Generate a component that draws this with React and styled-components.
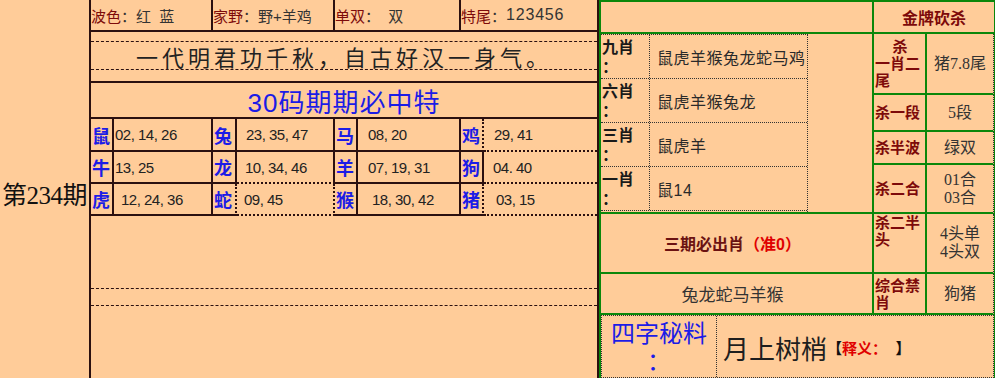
import React from "react";
import styled, { createGlobalStyle } from "styled-components";

const SANS = `"Liberation Sans", "Noto Sans CJK SC", sans-serif`;
const SERIF = `"Liberation Serif", "Noto Sans CJK SC", serif`;
const BG = "#FFCC99";
const DARK = "#2b1010";
const GREEN = "#0b870b";
const MAROON = "#7d0a0a";
const BLUE = "#1c1ce6";

const Global = createGlobalStyle`
  html, body { margin: 0; padding: 0; background: ${BG}; }
  * { box-sizing: border-box; }
`;

const Page = styled.div`
  display: flex;
  width: 995px;
  height: 378px;
  overflow: hidden;
  background: ${BG};
`;

const PeriodCell = styled.div`
  width: 89px;
  flex: none;
  display: flex;
  align-items: center;
  justify-content: center;
  padding-top: 8px;
  font-family: ${SERIF};
  font-size: 25px;
  color: #111;
  white-space: nowrap;
  letter-spacing: -0.5px;
`;

const MainTable = styled.div`
  width: 510px;
  flex: none;
  display: flex;
  flex-direction: column;
  border-left: 2px solid ${DARK};
  border-right: 2px solid ${DARK};
`;

const InfoRow = styled.div`
  display: grid;
  grid-template-columns: 122px 122px 126px 136px;
  height: 32px;
  border-bottom: 2px solid ${DARK};
`;

const InfoCell = styled.div`
  display: flex;
  align-items: center;
  font-family: ${SANS};
  font-size: 15px;
  color: #333;
  white-space: pre;
  border-right: ${(p) => (p.$last ? "none" : `2px solid ${DARK}`)};
`;

const Key = styled.span`
  color: ${MAROON};
`;

const Num = styled.span`
  font-size: 16px;
  letter-spacing: 0.8px;
`;

const PoemRow = styled.div`
  height: 51px;
  padding-top: 9px;
  border-bottom: 2px solid ${DARK};
`;

const PoemBand = styled.div`
  height: 29px;
  border-top: 1px dashed ${DARK};
  border-bottom: 1px dashed ${DARK};
  display: flex;
  align-items: center;
  justify-content: center;
  font-family: ${SERIF};
  font-size: 22px;
  letter-spacing: 4px;
  color: #222;
`;

const TitleRow = styled.div`
  height: 36px;
  border-bottom: 2px solid ${DARK};
  display: flex;
  align-items: center;
  justify-content: center;
  font-family: ${SANS};
  font-size: 26px;
  letter-spacing: 1px;
  color: ${BLUE};
`;

const ZGrid = styled.div`
  display: grid;
  grid-template-columns: 23px 99px 24px 98px 23px 103px 23px 113px;
  grid-template-rows: 33px 32px 32px;
`;

const ZLabel = styled.div`
  border-right: 2px ${(p) => p.$rs} ${DARK};
  border-bottom: 2px ${(p) => p.$bs} ${DARK};
  display: flex;
  align-items: center;
  padding-left: 1px;
  font-family: ${SERIF};
  font-weight: bold;
  font-size: 18px;
  color: ${BLUE};
`;

const ZValue = styled.div`
  border-right: ${(p) => (p.$last ? "none" : `2px ${p.$rs} ${DARK}`)};
  border-bottom: 2px ${(p) => p.$bs} ${DARK};
  display: flex;
  align-items: center;
  padding-left: ${(p) => p.$pad}px;
  font-family: ${SANS};
  font-size: 15px;
  letter-spacing: -0.5px;
  color: #222;
  white-space: pre;
`;

const EmptyArea = styled.div`
  flex: 1;
  padding-top: 72px;
`;

const DashedBand = styled.div`
  height: 18px;
  border-top: 1px dashed ${DARK};
  border-bottom: 1px dashed ${DARK};
`;

const RightPanel = styled.div`
  width: 396px;
  flex: none;
  display: flex;
  flex-direction: column;
  border-left: 2px solid ${GREEN};
  border-top: 2px solid ${GREEN};
  border-right: 1px solid ${GREEN};
`;

const TopArea = styled.div`
  display: flex;
  height: 313px;
`;

const LeftSection = styled.div`
  width: 273px;
  flex: none;
  display: flex;
  flex-direction: column;
  border-right: 2px solid ${GREEN};
`;

const BlankHeader = styled.div`
  height: 32px;
  border-bottom: 2px solid ${GREEN};
`;

const ZodiacList = styled.div`
  height: 178px;
  width: 207px;
  display: flex;
  flex-direction: column;
  border-top: 1px dotted #333;
  border-right: 1px dotted #333;
  padding-bottom: 2px;
`;

const ZRow = styled.div`
  flex: 1;
  display: flex;
  border-bottom: 1px dotted #333;
`;

const ZRowLabel = styled.div`
  width: 49px;
  flex: none;
  border-right: 1px dotted #333;
  padding: 3px 6px 0 1px;
  font-family: ${SANS};
  font-weight: bold;
  font-size: 16px;
  line-height: 20px;
  color: #1a1a1a;
`;

const ZRowValue = styled.div`
  flex: 1;
  display: flex;
  align-items: center;
  padding-left: 7px;
  font-family: ${SANS};
  font-size: 16px;
  letter-spacing: 0.5px;
  color: #2a2a2a;
`;

const BoldRow = styled.div`
  height: 62px;
  border-top: 2px solid ${GREEN};
  border-bottom: 2px solid ${GREEN};
  display: flex;
  align-items: center;
  justify-content: center;
  padding-right: 8px;
  font-family: ${SANS};
  font-weight: bold;
  font-size: 16px;
  color: #6b1212;
`;

const Red = styled.span`
  color: #e00000;
`;

const PlainRow = styled.div`
  height: 41px;
  border-bottom: 2px solid ${GREEN};
  display: flex;
  align-items: center;
  justify-content: center;
  padding-right: 8px;
  font-family: ${SANS};
  font-size: 17px;
  color: #333;
`;

const KillColumn = styled.div`
  flex: 1;
  display: flex;
  flex-direction: column;
`;

const KillHeader = styled.div`
  height: 32px;
  border-bottom: 2px solid ${GREEN};
  display: flex;
  align-items: center;
  justify-content: center;
  font-family: ${SANS};
  font-weight: bold;
  font-size: 16px;
  color: ${MAROON};
`;

const KillRow = styled.div`
  height: ${(p) => p.$h}px;
  display: grid;
  grid-template-columns: 53px 1fr;
  border-bottom: 2px solid ${GREEN};
  border-right: 1px dotted #333;
`;

const KillLabel = styled.div`
  border-right: 2px solid ${GREEN};
  display: flex;
  flex-direction: column;
  justify-content: ${(p) => (p.$top ? "flex-start" : "center")};
  padding-left: 1px;
  font-family: ${SANS};
  font-weight: bold;
  font-size: 15px;
  line-height: 17px;
  color: ${MAROON};
`;

const LabelLine = styled.span`
  display: block;
  text-align: ${(p) => p.$align || "left"};
`;

const KillValue = styled.div`
  display: flex;
  flex-direction: column;
  align-items: center;
  justify-content: center;
  font-family: ${SERIF};
  font-size: 16px;
  line-height: 18px;
  color: #333;
`;

const SecretRow = styled.div`
  height: 63px;
  display: flex;
  border: 1px dotted #333;
`;

const SecretLabel = styled.div`
  width: 115px;
  flex: none;
  border-right: 1px dotted #333;
  padding-top: 4px;
  text-align: center;
  font-family: ${SANS};
  font-size: 24px;
  line-height: 28px;
  color: ${BLUE};
`;

const SecretValue = styled.div`
  flex: 1;
  display: flex;
  align-items: center;
  padding-left: 6px;
  padding-top: 2px;
  font-family: ${SANS};
  font-size: 26px;
  color: #1e1e1e;
`;

const Note = styled.span`
  font-size: 15px;
  font-weight: bold;
  color: #111;
  white-space: pre;
`;

const zodiacRows = [
  [
    ["鼠", "02, 14, 26", 1],
    ["兔", "23, 35, 47", 9],
    ["马", "08, 20", 10],
    ["鸡", "29, 41", 10, true],
  ],
  [
    ["牛", "13, 25", 1],
    ["龙", "10, 34, 46", 8],
    ["羊", "07, 19, 31", 10],
    ["狗", "04. 40", 9],
  ],
  [
    ["虎", "12, 24, 36", 7],
    ["蛇", "09, 45", 7, true],
    ["猴", "18, 30, 42", 14],
    ["猪", "03, 15", 12, true],
  ],
];

const picks = [
  ["九肖", "鼠虎羊猴兔龙蛇马鸡"],
  ["六肖", "鼠虎羊猴兔龙"],
  ["三肖", "鼠虎羊"],
  ["一肖", "鼠14"],
];

const kills = [
  { h: 61, label: [["杀", "center"], ["一肖二"], ["尾"]], value: ["猪7.8尾"] },
  { h: 37, label: [["杀一段"]], value: ["5段"] },
  { h: 33, label: [["杀半波"]], value: ["绿双"] },
  { h: 49, label: [["杀二合"]], value: ["01合", "03合"] },
  { h: 60, label: [["杀二半"], ["头"]], value: ["4头单", "4头双"], top: true },
  { h: 41, label: [["综合禁"], ["肖"]], value: ["狗猪"] },
];

export default function App() {
  return (
    <>
      <Global />
      <Page>
        <PeriodCell>第234期</PeriodCell>
        <MainTable>
          <InfoRow>
            <InfoCell>
              <Key>波色</Key>：红  蓝
            </InfoCell>
            <InfoCell>
              <Key>家野</Key>：野+羊鸡
            </InfoCell>
            <InfoCell>
              <Key>单双</Key>：  双
            </InfoCell>
            <InfoCell $last>
              <Key>特尾</Key>：<Num>123456</Num>
            </InfoCell>
          </InfoRow>
          <PoemRow>
            <PoemBand>一代明君功千秋，自古好汉一身气。</PoemBand>
          </PoemRow>
          <TitleRow>30码期期必中特</TitleRow>
          <ZGrid>
            {zodiacRows.map((row, ri) =>
              row.map(([name, nums, pad, dotted], ci) => {
                const below = zodiacRows[ri + 1];
                const nextDotted = below && below[ci][3];
                const bs = dotted || nextDotted ? "dotted" : "solid";
                return (
                  <React.Fragment key={`${ri}-${ci}`}>
                    <ZLabel $rs={dotted ? "dotted" : "solid"} $bs="solid">
                      {name}
                    </ZLabel>
                    <ZValue
                      $pad={pad}
                      $rs={dotted ? "dotted" : "solid"}
                      $bs={bs}
                      $last={ci === 3}
                    >
                      {nums}
                    </ZValue>
                  </React.Fragment>
                );
              })
            )}
          </ZGrid>
          <EmptyArea>
            <DashedBand />
          </EmptyArea>
        </MainTable>
        <RightPanel>
          <TopArea>
            <LeftSection>
              <BlankHeader />
              <ZodiacList>
                {picks.map(([k, v]) => (
                  <ZRow key={k}>
                    <ZRowLabel>
                      {k}
                      <br />：
                    </ZRowLabel>
                    <ZRowValue>{v}</ZRowValue>
                  </ZRow>
                ))}
              </ZodiacList>
              <BoldRow>
                三期必出肖<Red>（准0）</Red>
              </BoldRow>
              <PlainRow>兔龙蛇马羊猴</PlainRow>
            </LeftSection>
            <KillColumn>
              <KillHeader>金牌砍杀</KillHeader>
              {kills.map((k, i) => (
                <KillRow key={i} $h={k.h}>
                  <KillLabel $top={k.top}>
                    {k.label.map(([t, a]) => (
                      <LabelLine key={t} $align={a}>
                        {t}
                      </LabelLine>
                    ))}
                  </KillLabel>
                  <KillValue>
                    {k.value.map((v) => (
                      <span key={v}>{v}</span>
                    ))}
                  </KillValue>
                </KillRow>
              ))}
            </KillColumn>
          </TopArea>
          <SecretRow>
            <SecretLabel>
              四字秘料
              <br />：
            </SecretLabel>
            <SecretValue>
              月上树梢
              <Note>
                【<Red>释义：</Red>  】
              </Note>
            </SecretValue>
          </SecretRow>
        </RightPanel>
      </Page>
    </>
  );
}
